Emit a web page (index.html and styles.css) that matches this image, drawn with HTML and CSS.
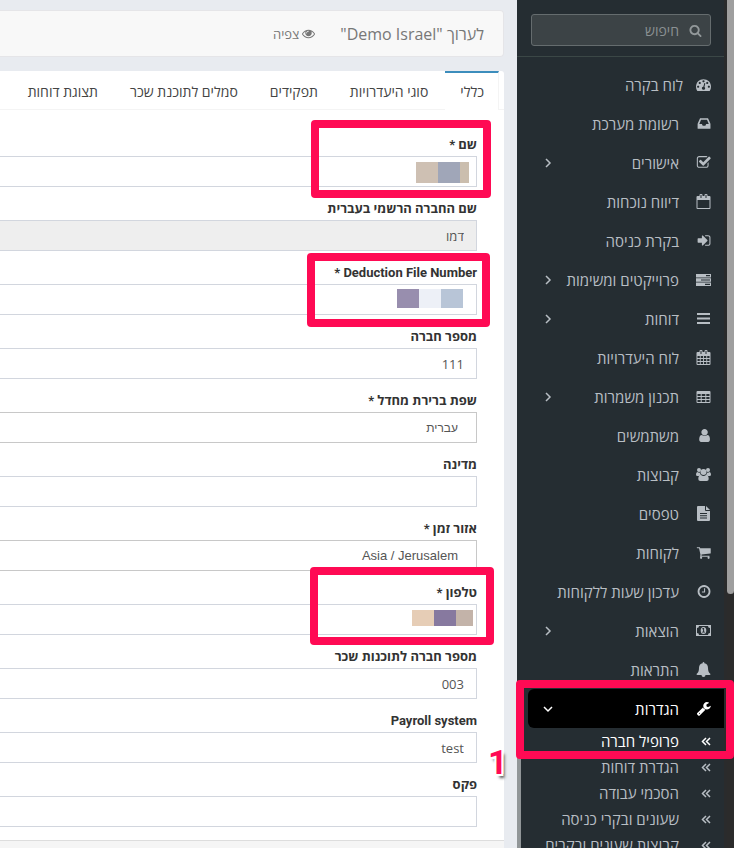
FILE: index.html
```html
<!DOCTYPE html>
<html lang="he" dir="rtl">
<head>
  <meta charset="UTF-8">
  <meta name="viewport" content="width=device-width, initial-scale=1.0">
  <title>פרופיל חברה</title>
  <link rel="stylesheet" href="styles.css">
</head>
<body>

  <div class="scrollbar"><div class="scrollbar-thumb"></div></div>

  <aside class="sidebar">
    <form class="search">
      <svg class="icon" viewBox="0 0 1792 1792"><path d="M1216 832q0-185-131.500-316.500t-316.500-131.500-316.500 131.500-131.500 316.500 131.500 316.500 316.500 131.500 316.500-131.500 131.500-316.500zm512 832q0 52-38 90t-90 38q-54 0-90-38l-343-342q-179 124-399 124-143 0-273.500-55.500t-225-150-150-225-55.500-273.500 55.500-273.500 150-225 225-150 273.500-55.500 273.500 55.500 225 150 150 225 55.500 273.500q0 220-124 399l343 343q37 37 37 90z"/></svg>
      <input type="text" placeholder="חיפוש" aria-label="חיפוש">
    </form>

    <nav class="menu">
      <a href="#" class="menu-item first">
        <svg class="icon" viewBox="0 0 1792 1792"><path d="M384 1152q0-53-37.500-90.500t-90.500-37.500-90.500 37.500-37.500 90.500 37.500 90.500 90.500 37.500 90.500-37.500 37.500-90.500zm192-448q0-53-37.500-90.500t-90.500-37.500-90.500 37.500-37.500 90.500 37.500 90.500 90.500 37.500 90.500-37.500 37.500-90.500zm428 481l101-382q6-26-7.500-48.500t-38.500-29.500-48 6.500-30 39.500l-101 382q-60 5-107 43.500t-63 98.500q-20 77 20 146t117 89 146-20 89-117q16-60-6-117t-72-91zm660-33q0-53-37.500-90.500t-90.500-37.500-90.500 37.500-37.500 90.500 37.500 90.500 90.500 37.500 90.500-37.500 37.500-90.500zm-640-640q0-53-37.500-90.500t-90.500-37.500-90.500 37.500-37.500 90.500 37.500 90.500 90.500 37.500 90.500-37.500 37.500-90.500zm448 192q0-53-37.500-90.500t-90.500-37.500-90.500 37.500-37.500 90.500 37.500 90.500 90.500 37.500 90.500-37.500 37.500-90.500zm320 448q0 261-141 483-19 29-54 29h-1402q-35 0-54-29-141-221-141-483 0-182 71-348t191-286 286-191 348-71 348 71 286 191 191 286 71 348z"/></svg>
        <span>לוח בקרה</span>
      </a>
      <a href="#" class="menu-item">
        <svg class="icon" viewBox="0 0 1664 1792"><path d="M1151 960h316q-1-3-2.500-8t-2.500-8l-212-496h-708l-212 496q-1 2-2.500 8t-2.500 8h316l95 192h320zm513 30v482q0 26-19 45t-45 19h-1408q-26 0-45-19t-19-45v-482q0-62 25-123l238-552q10-25 36.500-42t52.500-17h832q26 0 52.500 17t36.500 42l238 552q25 61 25 123z"/></svg>
        <span>רשומת מערכת</span>
      </a>
      <a href="#" class="menu-item">
        <svg class="icon" viewBox="0 0 1728 1792"><path d="M1472 930v318q0 119-84.500 203.500t-203.500 84.500h-832q-119 0-203.500-84.500t-84.500-203.500v-832q0-119 84.500-203.500t203.500-84.500h832q63 0 117 25 15 7 18 23 3 17-9 29l-49 49q-10 10-23 10-3 0-9-2-23-6-45-6h-832q-66 0-113 47t-47 113v832q0 66 47 113t113 47h832q66 0 113-47t47-113v-254q0-13 9-22l64-64q10-10 23-10 6 0 12 3 20 8 20 29zm231-489l-814 814q-24 24-57 24t-57-24l-430-430q-24-24-24-57t24-57l110-110q24-24 57-24t57 24l263 263 647-647q24-24 57-24t57 24l110 110q24 24 24 57t-24 57z"/></svg>
        <span>אישורים</span>
        <svg class="arrow" viewBox="0 0 10 10"><path d="M3 1l4 4-4 4"/></svg>
      </a>
      <a href="#" class="menu-item">
        <svg class="icon" viewBox="0 0 14 15"><path fill-rule="evenodd" d="M1 2h2V1q0-1 1-1h1q1 0 1 1v1h2V1q0-1 1-1h1q1 0 1 1v1h2q1 0 1 1v11q0 1-1 1H1q-1 0-1-1V3q0-1 1-1zm0 4v8h12V6zM4 1v3h1V1zm5 0v3h1V1z"/></svg>
        <span>דיווח נוכחות</span>
      </a>
      <a href="#" class="menu-item">
        <svg class="icon" viewBox="0 0 1664 1792"><path d="M1312 896q0 26-19 45l-544 544q-19 19-45 19t-45-19-19-45v-288h-448q-26 0-45-19t-19-45v-384q0-26 19-45t45-19h448v-288q0-26 19-45t45-19 45 19l544 544q19 19 19 45zm352-352v704q0 119-84.500 203.500t-203.500 84.500h-320q-13 0-22.500-9.500t-9.500-22.500q0-4-1-20t-.5-26.500 3-23.500 10-19.500 20.500-6.500h320q66 0 113-47t47-113v-704q0-66-47-113t-113-47h-312l-11.500-1-11.500-3-8-5.500-7-9-2-13.500q0-4-1-20t-.5-26.500 3-23.500 10-19.500 20.500-6.500h320q119 0 203.500 84.500t84.500 203.500z"/></svg>
        <span>בקרת כניסה</span>
      </a>
      <a href="#" class="menu-item">
        <svg class="icon" viewBox="0 0 15 15"><path fill-rule="evenodd" d="M0 2h15v3.400H0zm0 4.300h15v3.400H0zm0 4.300h15V14H0zM10 3v1.200h4V3zM5 7.400v1.200h9V7.400zm4 4.300v1.200h5v-1.200z"/></svg>
        <span>פרוייקטים ומשימות</span>
        <svg class="arrow" viewBox="0 0 10 10"><path d="M3 1l4 4-4 4"/></svg>
      </a>
      <a href="#" class="menu-item">
        <svg class="icon" viewBox="0 0 13 15"><path d="M0 2h13v2H0zm0 4.500h13v2H0zM0 11h13v2H0z"/></svg>
        <span>דוחות</span>
        <svg class="arrow" viewBox="0 0 10 10"><path d="M3 1l4 4-4 4"/></svg>
      </a>
      <a href="#" class="menu-item">
        <svg class="icon" viewBox="0 0 14 15"><path fill-rule="evenodd" d="M1 2h2V1q0-1 1-1h1q1 0 1 1v1h2V1q0-1 1-1h1q1 0 1 1v1h2q1 0 1 1v11q0 1-1 1H1q-1 0-1-1V3q0-1 1-1zM4 1v3h1V1zm5 0v3h1V1zM1 6v2h2.300V6zm3.200 0v2h2.400V6zm3.300 0v2h2.300V6zm3.200 0v2H13V6zM1 9v2h2.300V9zm3.200 0v2h2.400V9zm3.300 0v2h2.300V9zm3.200 0v2H13V9zM1 12v2h2.300v-2zm3.200 0v2h2.400v-2zm3.300 0v2h2.300v-2zm3.200 0v2H13v-2z"/></svg>
        <span>לוח היעדרויות</span>
      </a>
      <a href="#" class="menu-item">
        <svg class="icon" viewBox="0 0 14 15"><path fill-rule="evenodd" d="M1 2h12q1 0 1 1v10q0 1-1 1H1q-1 0-1-1V3q0-1 1-1zm0 3v2h3.200V5zm4.200 0v2h3.600V5zm4.600 0v2H13V5zM1 8v2h3.200V8zm4.200 0v2h3.600V8zm4.600 0v2H13V8zM1 11v2h3.200v-2zm4.200 0v2h3.600v-2zm4.600 0v2H13v-2z"/></svg>
        <span>תכנון משמרות</span>
        <svg class="arrow" viewBox="0 0 10 10"><path d="M3 1l4 4-4 4"/></svg>
      </a>
      <a href="#" class="menu-item">
        <svg class="icon" viewBox="0 0 1536 1792"><path d="M1536 1399q0 109-62.500 187t-150.500 78h-854q-88 0-150.500-78t-62.500-187q0-85 8.500-160.500t31.500-152 58.500-131 94-89 134.500-34.500q131 128 313 128t313-128q76 0 134.500 34.500t94 89 58.500 131 31.500 152 8.500 160.500zm-256-887q0 159-112.500 271.500t-271.500 112.500-271.500-112.500-112.500-271.500 112.500-271.500 271.500-112.500 271.500 112.500 112.500 271.500z"/></svg>
        <span>משתמשים</span>
      </a>
      <a href="#" class="menu-item">
        <svg class="icon" viewBox="0 0 15 15"><circle cx="3" cy="3" r="2"/><circle cx="12" cy="3" r="2"/><circle cx="7.500" cy="5" r="3"/><path d="M1.200 5Q3 6.200 4 5.500 4 7 5 8 3.500 8 2.800 9H1.400Q0 9 0 7.500 0 5.500 1.200 5zM13.800 5Q12 6.200 11 5.500 11 7 10 8q1.500 0 2.200 1h1.400Q15 9 15 7.500 15 5.500 13.800 5zM5 8q2.500 2 5 0 2.700 0 2.700 4 0 2-2 2H4.300q-2 0-2-2Q2.300 8 5 8z"/></svg>
        <span>קבוצות</span>
      </a>
      <a href="#" class="menu-item">
        <svg class="icon" viewBox="0 0 13 15"><path fill-rule="evenodd" d="M1 0h7v4q0 1 1 1h4v9q0 1-1 1H1q-1 0-1-1V1q0-1 1-1zm8 0l4 4H9zM3 7v1h7V7zm0 2.300v1h7v-1zm0 2.300v1h7v-1z"/></svg>
        <span>טפסים</span>
      </a>
      <a href="#" class="menu-item">
        <svg class="icon" viewBox="0 0 1728 1792"><path d="M704 1536q0 52-38 90t-90 38-90-38-38-90 38-90 90-38 90 38 38 90zm896 0q0 52-38 90t-90 38-90-38-38-90 38-90 90-38 90 38 38 90zm128-1088v512q0 24-16.500 42.500t-40.500 21.500l-1044 122q13 60 13 70 0 16-24 64h920q26 0 45 19t19 45-19 45-45 19h-1024q-26 0-45-19t-19-45q0-11 8-31.500t16-36 21.500-40 15.500-29.500l-177-823h-204q-26 0-45-19t-19-45 19-45 45-19h256q16 0 28.500 6.500t19.500 15.500 13 24.500 8 26 5.500 29.500 4.500 26h1201q26 0 45 19t19 45z"/></svg>
        <span>לקוחות</span>
      </a>
      <a href="#" class="menu-item">
        <svg class="icon" viewBox="0 0 1664 1792"><path d="M1024 544v448q0 14-9 23t-23 9h-320q-14 0-23-9t-9-23v-64q0-14 9-23t23-9h224v-352q0-14 9-23t23-9h64q14 0 23 9t9 23zm416 352q0-148-73-273t-198-198-273-73-273 73-198 198-73 273 73 273 198 198 273 73 273-73 198-198 73-273zm224 0q0 209-103 385.500t-279.500 279.500-385.500 103-385.500-103-279.500-279.500-103-385.500 103-385.500 279.500-279.500 385.500-103 385.500 103 279.500 279.500 103 385.500z"/></svg>
        <span>עדכון שעות ללקוחות</span>
      </a>
      <a href="#" class="menu-item">
        <svg class="icon" viewBox="0 0 15 15"><path fill-rule="evenodd" d="M0 2h15v11H0zm3 1q0 2-2 2v5q2 0 2 2h9q0-2 2-2V5q-2 0-2-2zm4.500 1q2.800 0 2.800 3.500T7.500 11 4.700 7.500 7.500 4zM6 5.800l.6.600.5-.4v2.800H6v.8h3v-.8h-.9V5H7z"/></svg>
        <span>הוצאות</span>
        <svg class="arrow" viewBox="0 0 10 10"><path d="M3 1l4 4-4 4"/></svg>
      </a>
      <a href="#" class="menu-item">
        <svg class="icon" viewBox="0 0 15 15"><path d="M7.500 0q.9 0 .9 1.200Q12 2 12 6q0 4.500 2.500 6 0 1-1 1h-4q0 2-2 2t-2-2h-4q-1 0-1-1Q3 10.500 3 6q0-4 3.600-4.800Q6.600 0 7.500 0z"/></svg>
        <span>התראות</span>
      </a>

      <div class="menu-group">
        <a href="#" class="menu-item active">
          <svg class="icon" viewBox="0 0 1728 1792"><path d="M448 1472q0-26-19-45t-45-19-45 19-19 45 19 45 45 19 45-19 19-45zm644-420l-682 682q-37 37-90 37-52 0-91-37l-106-108q-38-36-38-90 0-53 38-91l681-681q39 98 114.500 173.500t173.500 114.500zm634-435q0 39-23 106-47 134-164.500 217.500t-258.500 83.500q-185 0-316.500-131.500t-131.500-316.500 131.500-316.500 316.500-131.500q58 0 121.500 16.500t107.500 46.500q16 11 16 28t-16 28l-293 169v224l193 107q5-3 79-48.500t135.500-81 70.500-35.500q15 0 23.500 10t8.500 25z"/></svg>
          <span>הגדרות</span>
          <svg class="arrow" viewBox="0 0 10 10"><path d="M1 3l4 4 4-4"/></svg>
        </a>
        <div class="submenu">
          <a href="#" class="current"><svg class="icon" viewBox="0 0 15 15"><path class="line" d="M10 4L6.500 7.500 10 11M14 4l-3.500 3.500L14 11"/></svg>פרופיל חברה</a>
          <a href="#"><svg class="icon" viewBox="0 0 15 15"><path class="line" d="M10 4L6.500 7.500 10 11M14 4l-3.500 3.500L14 11"/></svg>הגדרת דוחות</a>
          <a href="#"><svg class="icon" viewBox="0 0 15 15"><path class="line" d="M10 4L6.500 7.500 10 11M14 4l-3.500 3.500L14 11"/></svg>הסכמי עבודה</a>
          <a href="#"><svg class="icon" viewBox="0 0 15 15"><path class="line" d="M10 4L6.500 7.500 10 11M14 4l-3.500 3.500L14 11"/></svg>שעונים ובקרי כניסה</a>
          <a href="#"><svg class="icon" viewBox="0 0 15 15"><path class="line" d="M10 4L6.500 7.500 10 11M14 4l-3.500 3.500L14 11"/></svg>קבוצות שעונים ובקרים</a>
        </div>
        <div class="mark mark-menu"></div>
        <div class="step">1</div>
      </div>
    </nav>
  </aside>

  <main class="content">
    <header class="page-head">
      <h1>לערוך "Demo Israel"</h1>
      <a href="#">
        <svg viewBox="0 0 1792 1792"><path d="M1664 960q-152-236-381-353 61 104 61 225 0 185-131.500 316.500t-316.500 131.500-316.500-131.500-131.500-316.500q0-121 61-225-229 117-381 353 133 205 333.500 326.500t434.500 121.500 434.500-121.500 333.500-326.500zm-720-384q0-20-14-34t-34-14q-125 0-214.500 89.500t-89.500 214.500q0 20 14 34t34 14 34-14 14-34q0-86 61-147t147-61q20 0 34-14t14-34zm848 384q0 34-20 69-140 230-376.500 368.500t-499.500 138.500-499.500-139-376.500-368q-20-35-20-69t20-69q140-229 376.500-368t499.500-139 499.500 139 376.500 368q20 35 20 69z"/></svg>
        צפיה
      </a>
    </header>

    <section class="panel">
      <nav class="tabs">
        <a href="#" class="active">כללי</a>
        <a href="#">סוגי היעדרויות</a>
        <a href="#">תפקידים</a>
        <a href="#">סמלים לתוכנת שכר</a>
        <a href="#">תצוגת דוחות</a>
      </nav>

      <form class="fields">
        <div class="field">
          <label for="name">שם *</label>
          <input type="text" id="name">
          <div class="mosaic mosaic-name"><i></i><i></i><i></i></div>
          <div class="mark mark-name"></div>
        </div>
        <div class="field">
          <label for="official">שם החברה הרשמי בעברית</label>
          <input type="text" id="official" value="דמו" readonly>
        </div>
        <div class="field">
          <label for="deduction">Deduction File Number *</label>
          <input type="text" id="deduction">
          <div class="mosaic mosaic-file"><i></i><i></i><i></i></div>
          <div class="mark mark-file"></div>
        </div>
        <div class="field">
          <label for="number">מספר חברה</label>
          <input type="text" id="number" value="111">
        </div>
        <div class="field">
          <label for="lang">שפת ברירת מחדל *</label>
          <select id="lang" class="small"><option>עברית</option></select>
        </div>
        <div class="field">
          <label for="country">מדינה</label>
          <input type="text" id="country">
        </div>
        <div class="field">
          <label for="zone">אזור זמן *</label>
          <select id="zone"><option>Asia / Jerusalem</option></select>
        </div>
        <div class="field">
          <label for="phone">טלפון *</label>
          <input type="text" id="phone">
          <div class="mosaic mosaic-phone"><i></i><i></i><i></i></div>
          <div class="mark mark-phone"></div>
        </div>
        <div class="field">
          <label for="payroll-number">מספר חברה לתוכנות שכר</label>
          <input type="text" id="payroll-number" value="003">
        </div>
        <div class="field">
          <label for="payroll">Payroll system</label>
          <input type="text" id="payroll" value="test">
        </div>
        <div class="field">
          <label for="fax">פקס</label>
          <input type="text" id="fax">
        </div>
      </form>
      <footer class="panel-foot"></footer>
    </section>
  </main>

</body>
</html>
```
FILE: styles.css
```css
* {
  box-sizing: border-box;
}

body {
  margin: 0;
  height: 100vh;
  display: flex;
  overflow: hidden;
  background: #e8ebf0;
  color: #333;
  font-family: "Open Sans", "Noto Sans", sans-serif;
  font-size: 13px;
}

a {
  color: inherit;
  text-decoration: none;
}

/* scrollbar */
.scrollbar {
  flex: none;
  width: 7px;
  background: #2b2b2b;
}

.scrollbar-thumb {
  height: 70%;
  background: #9f9f9f;
  border-radius: 0 0 4px 4px;
}

/* sidebar */
.sidebar {
  position: relative;
  flex: none;
  width: 210px;
  height: 100vh;
  border-right: 3px solid #2a2b2c;
  background: #252d32;
  color: #b8bec4;
}

.sidebar::after {
  content: "";
  position: absolute;
  left: 0;
  top: 758px;
  bottom: 0;
  width: 4px;
  background: #919698;
}

.icon {
  flex: none;
  width: 15px;
  height: 15px;
  fill: currentColor;
}

.menu .icon {
  margin-left: 17px;
}

.menu .first .icon {
  margin-left: 13px;
}

.line {
  fill: none;
  stroke: currentColor;
  stroke-width: 1.5;
}

.search {
  display: flex;
  align-items: center;
  gap: 10px;
  height: 32px;
  margin: 14px 13px 10px 14px;
  padding: 0 8px;
  border: 1px solid #656c6e;
  border-radius: 3px;
  background: #3c4346;
  color: #92989a;
}

.search .icon {
  width: 13px;
  height: 13px;
}

.search input {
  flex: 1;
  min-width: 0;
  padding: 0;
  border: 0;
  outline: none;
  background: none;
  color: inherit;
  font: 14px "Open Sans", "Noto Sans", sans-serif;
}

.search input::placeholder {
  color: #8b9193;
  opacity: 1;
}

.menu {
  padding-top: 8px;
  border-top: 1px solid #3b4746;
  font-size: 15px;
}

.menu-item {
  display: flex;
  align-items: center;
  height: 39px;
  margin-left: 11px;
  padding: 0 13px 0 15px;
  border-radius: 6px 0 0 6px;
  white-space: nowrap;
}

.menu-item.active {
  background: #000;
  color: #fff;
}

.arrow {
  width: 10px;
  height: 10px;
  margin-right: auto;
  fill: none;
  stroke: currentColor;
  stroke-width: 1.5;
}

.menu-group {
  position: relative;
}

.submenu a {
  display: flex;
  align-items: center;
  height: 26px;
  padding-right: 13px;
  white-space: nowrap;
}

.submenu .current {
  color: #fff;
}

/* content */
.content {
  flex: 1;
  min-width: 0;
  padding: 10px 0 0 0;
  margin-right: 13px;
}

.page-head {
  display: flex;
  align-items: center;
  gap: 25px;
  height: 47px;
  padding-right: 19px;
  border: 1px solid #e5e5e8;
  border-left: 0;
  border-radius: 0 4px 4px 0;
  background: #f8f8f8;
  color: #777;
}

.page-head h1 {
  margin: 0;
  font-size: 16px;
  font-weight: 400;
}

.page-head a {
  display: flex;
  align-items: center;
  gap: 3px;
}

.page-head svg {
  width: 13px;
  height: 13px;
  fill: currentColor;
}

.panel {
  margin-top: 14px;
  border-radius: 0 3px 0 0;
  background: #fff;
}

.tabs {
  display: flex;
  gap: 2px;
  height: 39px;
  padding-right: 5px;
  border-bottom: 1px solid #f4f4f4;
  color: #444;
  font-size: 14px;
  white-space: nowrap;
}

.tabs a {
  height: 39px;
  padding: 0 15px;
  border-top: 2px solid transparent;
  line-height: 38px;
}

.tabs .active {
  padding-right: 14px;
  border-top-color: #3c8dbc;
  border-right: 1px solid #f4f4f4;
  background: #fff;
}

.fields {
  padding: 24px 27px 2px 0;
}

.field {
  position: relative;
  margin-bottom: 11px;
}

.field label {
  display: block;
  line-height: 22px;
  font-family: Roboto, "Open Sans", "Noto Sans", sans-serif;
  font-weight: 700;
}

.field input,
.field select {
  display: block;
  width: 100%;
  height: 31px;
  padding: 0 12px;
  border: 1px solid #d2d6de;
  border-left: 0;
  border-radius: 0;
  outline: none;
  background: #fff;
  color: #555;
  font: 13px "Open Sans", "Noto Sans", sans-serif;
}

.field input[readonly] {
  background: #eee;
}

.field select {
  appearance: none;
  padding: 0 18px;
  border-color: #c8c8c8;
  font-family: "Liberation Sans", Arial, sans-serif;
}

.field .small {
  font-size: 12px;
}

.panel-foot {
  height: 40px;
  border-top: 1px solid #ddd;
  background: #f5f5f5;
}

/* hidden values */
.mosaic {
  position: absolute;
  display: flex;
  direction: ltr;
}

.mosaic i {
  width: 22px;
}

.mosaic-name {
  top: 28px;
  right: 8px;
  height: 21px;
}

.mosaic-name i:nth-child(1) { background: #cec0b3; }
.mosaic-name i:nth-child(2) { background: #a0a6b8; }
.mosaic-name i:nth-child(3) { background: #cbbeae; width: 9px; }

.mosaic-file {
  top: 27px;
  right: 14px;
  height: 19px;
}

.mosaic-file i:nth-child(1) { background: #988eae; }
.mosaic-file i:nth-child(2) { background: #edf0f7; }
.mosaic-file i:nth-child(3) { background: #b8c5d7; }

.mosaic-phone {
  top: 28px;
  right: 4px;
  height: 16px;
}

.mosaic-phone i:nth-child(1) { background: #e6cdb6; }
.mosaic-phone i:nth-child(2) { background: #87799f; }
.mosaic-phone i:nth-child(3) { background: #c3b3a9; width: 17px; }

/* callouts */
.mark {
  position: absolute;
  z-index: 5;
  border: 8px solid #ff0a54;
  border-radius: 4px;
  pointer-events: none;
}

.mark-name {
  top: -14px;
  right: -14px;
  width: 180px;
  height: 78px;
}

.mark-file {
  top: -9px;
  right: -13px;
  width: 183px;
  height: 74px;
}

.mark-phone {
  top: -15px;
  right: -17px;
  width: 184px;
  height: 78px;
}

.mark-menu {
  top: -9px;
  left: -1px;
  right: -10px;
  height: 79px;
}

.step {
  position: absolute;
  z-index: 5;
  top: 56px;
  left: -29px;
  color: #ff0a54;
  font: bold 34px/34px Roboto, sans-serif;
  text-shadow: -2px 0 #fff, 2px 0 #fff, 0 -2px #fff, 0 2px #fff, 2px 2px #fff, -2px 2px #fff, 3px 4px 3px #555;
}
```
